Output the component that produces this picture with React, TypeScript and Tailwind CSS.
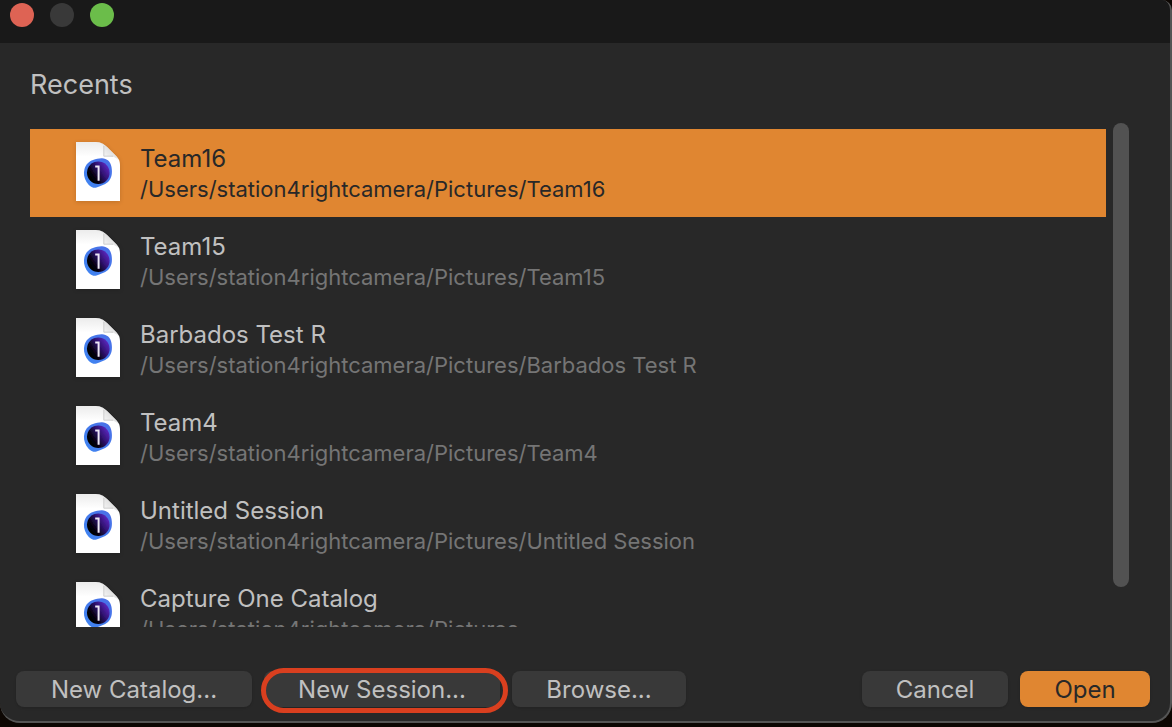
import React from "react";

type Recent = { name: string; path: string };

const recents: Recent[] = [
  { name: "Team16", path: "/Users/station4rightcamera/Pictures/Team16" },
  { name: "Team15", path: "/Users/station4rightcamera/Pictures/Team15" },
  { name: "Barbados Test R", path: "/Users/station4rightcamera/Pictures/Barbados Test R" },
  { name: "Team4", path: "/Users/station4rightcamera/Pictures/Team4" },
  { name: "Untitled Session", path: "/Users/station4rightcamera/Pictures/Untitled Session" },
  { name: "Capture One Catalog", path: "/Users/station4rightcamera/Pictures" },
];

function IconDefs() {
  return (
    <svg width="0" height="0" className="absolute" aria-hidden="true">
      <defs>
        <linearGradient id="page" x1="0" y1="0" x2="0" y2="1">
          <stop offset="0" stopColor="#ececec" />
          <stop offset="0.25" stopColor="#ffffff" />
        </linearGradient>
        <linearGradient id="fold" x1="0" y1="1" x2="0.6" y2="0.4">
          <stop offset="0" stopColor="#ffffff" />
          <stop offset="1" stopColor="#dedede" />
        </linearGradient>
        <linearGradient id="rim" x1="1" y1="0" x2="0" y2="1">
          <stop offset="0" stopColor="#4a6ee6" />
          <stop offset="1" stopColor="#3f86f2" />
        </linearGradient>
        <linearGradient id="lens" x1="0.9" y1="0.15" x2="0.1" y2="0.7">
          <stop offset="0" stopColor="#5c27c0" />
          <stop offset="0.45" stopColor="#2c1068" />
          <stop offset="0.8" stopColor="#06020f" />
          <stop offset="1" stopColor="#000000" />
        </linearGradient>
        <filter id="soft" x="-20%" y="-20%" width="140%" height="140%">
          <feGaussianBlur stdDeviation="0.6" />
        </filter>
      </defs>
    </svg>
  );
}

function DocumentIcon() {
  return (
    <svg width="44" height="62" viewBox="0 0 44 62" className="shrink-0 overflow-visible drop-shadow-sm" aria-hidden="true">
      <path d="M0 0H20C25 0 28 2 31 5L40 14C43 17 44 19 44 24V59H0Z" fill="url(#page)" />
      <path d="M25 0.800C28.500 4 28.500 9 27.800 14.200C34 13.500 39 14 42.500 18L40 14L31 5Z" fill="url(#fold)" />
      <path d="M27.800 4V14.200H37" fill="none" stroke="#c4c4c4" strokeWidth="0.8" />
      <path
        d="M26 16.300C31 16.500 34.500 19.500 35.500 25C36.500 31 36 36 32 40C28.500 43 24 44 20.500 45.500C16.500 47 13 43.500 10.500 40C8 36 7.300 31 8.500 27C10 22 13 19.500 17 18C20 17 23 16.200 26 16.300Z"
        fill="url(#rim)"
      />
      <circle cx="22.300" cy="30.800" r="11.300" fill="url(#lens)" filter="url(#soft)" />
      <path d="M19.200 24.500H22.600V38.800" fill="none" stroke="#ece8f5" strokeWidth="2" />
    </svg>
  );
}

function RecentRow({ item, selected }: { item: Recent; selected: boolean }) {
  return (
    <li className="shrink-0">
      <button
        type="button"
        aria-pressed={selected}
        className={
          selected
            ? "flex h-[88px] w-full items-center gap-5 bg-[#e08631] pl-[46px] text-left text-[#282828]"
            : "flex h-[88px] w-full items-center gap-5 pl-[46px] text-left text-[#c0c0c0]"
        }
      >
        <DocumentIcon />
        <span className="flex flex-col pt-[2px]">
          <span className="text-[24px] leading-[30px]">{item.name}</span>
          <span className={selected ? "text-[22px] leading-[30px]" : "text-[22px] leading-[30px] text-[#757575]"}>
            {item.path}
          </span>
        </span>
      </button>
    </li>
  );
}

const buttonBase = "relative h-9 rounded-lg pt-[2px] text-[24px] leading-[34px] shadow-sm";

export default function App() {
  return (
    <div className="h-screen overflow-hidden bg-[#0d0703] pb-1 font-['Inter',sans-serif]">
      <IconDefs />
      <main className="flex h-full flex-col overflow-hidden rounded-b-[20px] rounded-tr-[10px] border-r-2 border-b-2 border-[#555555] bg-[#282828]">
        <header className="flex h-[43px] shrink-0 gap-4 bg-[#191919] pt-[3px] pl-[10px]">
          <button type="button" aria-label="Close" className="size-6 rounded-full bg-[#de6354]" />
          <button type="button" aria-label="Minimize" disabled className="size-6 rounded-full bg-[#393939]" />
          <button type="button" aria-label="Zoom" className="size-6 rounded-full bg-[#6bbd4a]" />
        </header>

        <h1 className="h-20 shrink-0 pt-6 pl-[30px] text-[27px] leading-[36px] text-[#c0c0c0]">Recents</h1>

        <section className="flex min-h-0 flex-1 gap-[7px] pr-[41px] pl-[30px]">
          <div className="flex min-w-0 flex-1 flex-col pt-[6px]">
            <ul className="flex min-h-0 flex-1 flex-col overflow-hidden">
              {recents.map((item, index) => (
                <RecentRow key={item.name} item={item} selected={index === 0} />
              ))}
            </ul>
          </div>
          <div className="w-4" aria-hidden="true">
            <div className="h-[92%] rounded-full bg-[#525252]" />
          </div>
        </section>

        <footer className="flex shrink-0 gap-3 pt-11 pr-5 pb-[14px] pl-4">
          <button type="button" className={`${buttonBase} w-[236px] bg-[#393939] text-[#c0c0c0]`}>
            New Catalog...
          </button>
          <button type="button" className={`${buttonBase} w-[236px] bg-[#393939] text-[#c0c0c0]`}>
            New Session...
            <span className="absolute -top-[3px] -right-2 -bottom-[6px] -left-[3px] rounded-full border-[5px] border-[#d93f1f]" />
          </button>
          <button type="button" className={`${buttonBase} w-[174px] bg-[#393939] text-[#c0c0c0]`}>
            Browse...
          </button>
          <button type="button" className={`${buttonBase} ml-auto w-[146px] bg-[#393939] text-[#c0c0c0]`}>
            Cancel
          </button>
          <button type="button" className={`${buttonBase} w-[130px] bg-[#e08631] text-[#282828]`}>
            Open
          </button>
        </footer>
      </main>
    </div>
  );
}
